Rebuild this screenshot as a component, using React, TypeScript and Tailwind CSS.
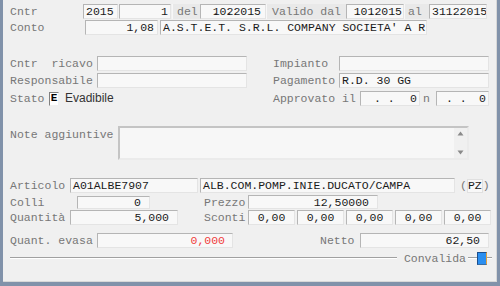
import React from "react";

function Field({
  w, align = "left", h = "h-[15px]", className = "", children,
}: {
  w: string; align?: "left" | "right" | "center"; h?: string; className?: string; children?: React.ReactNode;
}) {
  const a = align === "right" ? "justify-end" : align === "center" ? "justify-center" : "justify-start pl-[2px]";
  return (
    <div
      className={`${w} ${h} ${a} relative flex items-center shrink-0 bg-[#f8f8f8] border border-t-[#b5b5b5] border-l-[#b5b5b5] border-b-[#e4e4e4] border-r-[#e4e4e4] text-[#1a1a1a] whitespace-pre overflow-hidden ${className}`}
    >
      {children}
    </div>
  );
}

function Label({ w, className = "", children }: { w: string; className?: string; children: React.ReactNode }) {
  return <div className={`${w} shrink-0 text-[#777] whitespace-pre ${className}`}>{children}</div>;
}

// separator dot of a masked date, laid over the digits
function MaskDot({ at }: { at: string }) {
  return <span className={`absolute top-0 h-full flex items-center ${at}`}>.</span>;
}

function TagBox({ w, className = "", children }: { w: string; className?: string; children: React.ReactNode }) {
  return (
    <div className={`${w} h-[15px] shrink-0 flex items-center bg-[#e9e9e9] border-l border-[#f7f7f7] text-[#777] whitespace-pre ${className}`}>
      {children}
    </div>
  );
}

export default function App() {
  return (
    <div className="w-[500px] h-[286px] bg-[#8192aa] pl-[3px] pr-[3px] pb-[4px]">
      <div className="h-full bg-[#f0f0f0] border-r border-b border-[#d8d8d8] pl-[7px] pt-[4px] font-mono text-[11.5px] leading-[13px]">
        {/* testata contratto */}
        <div className="flex items-center h-[15px]">
          <Label w="w-[73px]">Cntr</Label>
          <Field w="w-[35px]">2015</Field>
          <Field w="w-[52px] ml-[1px]" align="right" className="pr-[2px]">1</Field>
          <div className="ml-[1px]"><TagBox w="w-[28px]" className="pl-[4px]">del</TagBox></div>
          <Field w="w-[66px]" align="right" className="pr-[4px]">
            1022015
            <MaskDot at="left-[11px]" />
            <MaskDot at="left-[25px]" />
          </Field>
          <TagBox w="w-[80px]" className="pl-[5px]">Valido dal</TagBox>
          <Field w="w-[58px]" align="right" className="pr-[1px]">
            1012015
            <MaskDot at="left-[7px]" />
            <MaskDot at="left-[21px]" />
          </Field>
          <TagBox w="w-[25px]" className="pl-[3px]">al</TagBox>
          <Field w="w-[58px]" className="pl-[1px]">31122015</Field>
        </div>
        <div className="flex items-center h-[15px] mt-[1px]">
          <Label w="w-[75px]">Conto</Label>
          <Field w="w-[73px]" align="right" className="pr-[3px]">1,08</Field>
          <Field w="w-[267px] ml-[2px]" className="pl-[1px]">A.S.T.E.T. S.R.L. COMPANY SOCIETA' A R</Field>
        </div>

        {/* dati generali */}
        <div className="flex items-center h-[15px] mt-[21px]">
          <Label w="w-[87px]">Cntr  ricavo</Label>
          <Field w="w-[150px]" />
          <Label w="w-[66px] ml-[26px]">Impianto</Label>
          <Field w="w-[150px]" />
        </div>
        <div className="flex items-center h-[15px] mt-[2px]">
          <Label w="w-[87px]">Responsabile</Label>
          <Field w="w-[150px]" />
          <Label w="w-[66px] ml-[26px]">Pagamento</Label>
          <Field w="w-[150px]">R.D. 30 GG</Field>
        </div>
        <div className="flex items-center h-[15px] mt-[3px]">
          <div className="w-[263px] shrink-0 flex items-center">
            <Label w="w-[39px]">Stato</Label>
            <div className="w-[10px] h-[14px] flex items-center justify-center bg-white border border-t-[#808080] border-l-[#808080] border-b-[#f0f0f0] border-r-[#f0f0f0] font-bold text-[11px] text-black">E</div>
            <span className="ml-[6px] font-[Liberation_Sans,Arial,sans-serif] text-[12px] text-[#333]">Evadibile</span>
          </div>
          <Label w="w-[87px]">Approvato il</Label>
          <Field w="w-[60px]" align="right" className="pr-[2px]">
            <span className="mr-auto pl-[13px]">. .</span>0
          </Field>
          <div className="w-[16px] shrink-0 text-[#777] pl-[3px]">n</div>
          <Field w="w-[53px]" align="right" className="pr-[2px]">
            <span className="mr-auto pl-[9px]">. .</span>0
          </Field>
        </div>

        {/* note */}
        <div className="flex items-start mt-[20px]">
          <Label w="w-[108px]" className="pt-[2px]">Note aggiuntive</Label>
          <div className="w-[351px] h-[34px] shrink-0 flex bg-[#f7f7f7] border-2 border-t-[#c4c4c4] border-l-[#c4c4c4] border-b-[#ebebeb] border-r-[#ebebeb]">
            <div className="flex-1" />
            <div className="w-[13px] flex flex-col items-center justify-between py-[3px] bg-[#f0f0f0] text-[#8a8a8a]">
              <svg width="7" height="5" viewBox="0 0 7 5"><path d="M3.5 0.5 L6.5 4.5 L0.5 4.5 Z" fill="currentColor" /></svg>
              <svg width="7" height="5" viewBox="0 0 7 5"><path d="M0.5 0.5 L6.5 0.5 L3.5 4.5 Z" fill="currentColor" /></svg>
            </div>
          </div>
        </div>

        {/* riga articolo */}
        <div className="flex items-center h-[15px] mt-[18px]">
          <Label w="w-[60px]">Articolo</Label>
          <Field w="w-[128px]">A01ALBE7907</Field>
          <Field w="w-[255px] ml-[2px]">ALB.COM.POMP.INIE.DUCATO/CAMPA</Field>
          <div className="ml-[5px] flex items-center text-[#777]">
            (<span className="h-[14px] flex items-center bg-[#f8f8f8] border border-[#e0e0e0] text-[#1a1a1a]">PZ</span>)
          </div>
        </div>
        <div className="flex items-center h-[14px] mt-[2px]">
          <Label w="w-[67px]">Colli</Label>
          <Field w="w-[73px]" h="h-[13px]" align="right" className="pr-[8px]">0</Field>
          <Label w="w-[44px] ml-[54px]">Prezzo</Label>
          <Field w="w-[130px]" h="h-[14px]" align="right" className="pr-[8px]">12,50000</Field>
        </div>
        <div className="flex items-center h-[15px] mt-[1px]">
          <Label w="w-[60px]">Quantità</Label>
          <Field w="w-[108px]" align="right" className="pr-[8px]">5,000</Field>
          <Label w="w-[44px] ml-[26px]">Sconti</Label>
          <div className="flex gap-[2px]">
            {["0,00", "0,00", "0,00", "0,00", "0,00"].map((s, i) => (
              <Field key={i} w="w-[47px]" align="center">{s}</Field>
            ))}
          </div>
        </div>
        <div className="flex items-center h-[15px] mt-[8px]">
          <Label w="w-[87px]">Quant. evasa</Label>
          <Field w="w-[136px]" align="right" className="pr-[7px] text-[#f03c3c]">0,000</Field>
          <Label w="w-[40px] ml-[87px]">Netto</Label>
          <Field w="w-[129px]" align="right" className="pr-[8px]">62,50</Field>
        </div>

        {/* convalida */}
        <div className="flex items-center w-[482px] h-[14px] mt-[3px]">
          <div className="flex-1 h-[2px] border-t border-[#a0a0a0] border-b border-b-white" />
          <span className="ml-[7px] mr-[2px] text-[#777]">Convalida</span>
          <div className="w-[9px] h-[2px] border-t border-[#a0a0a0] border-b border-b-white" />
          <div className="w-[10px] h-[13px] shrink-0 bg-[#2b8ff0] border border-l-[#1c4f8e] border-t-[#1c4f8e] border-r-[#e0a040] border-b-[#3a6ea5]" />
          <div className="w-[5px] h-[2px] border-t border-[#a0a0a0] border-b border-b-white" />
        </div>
      </div>
    </div>
  );
}
